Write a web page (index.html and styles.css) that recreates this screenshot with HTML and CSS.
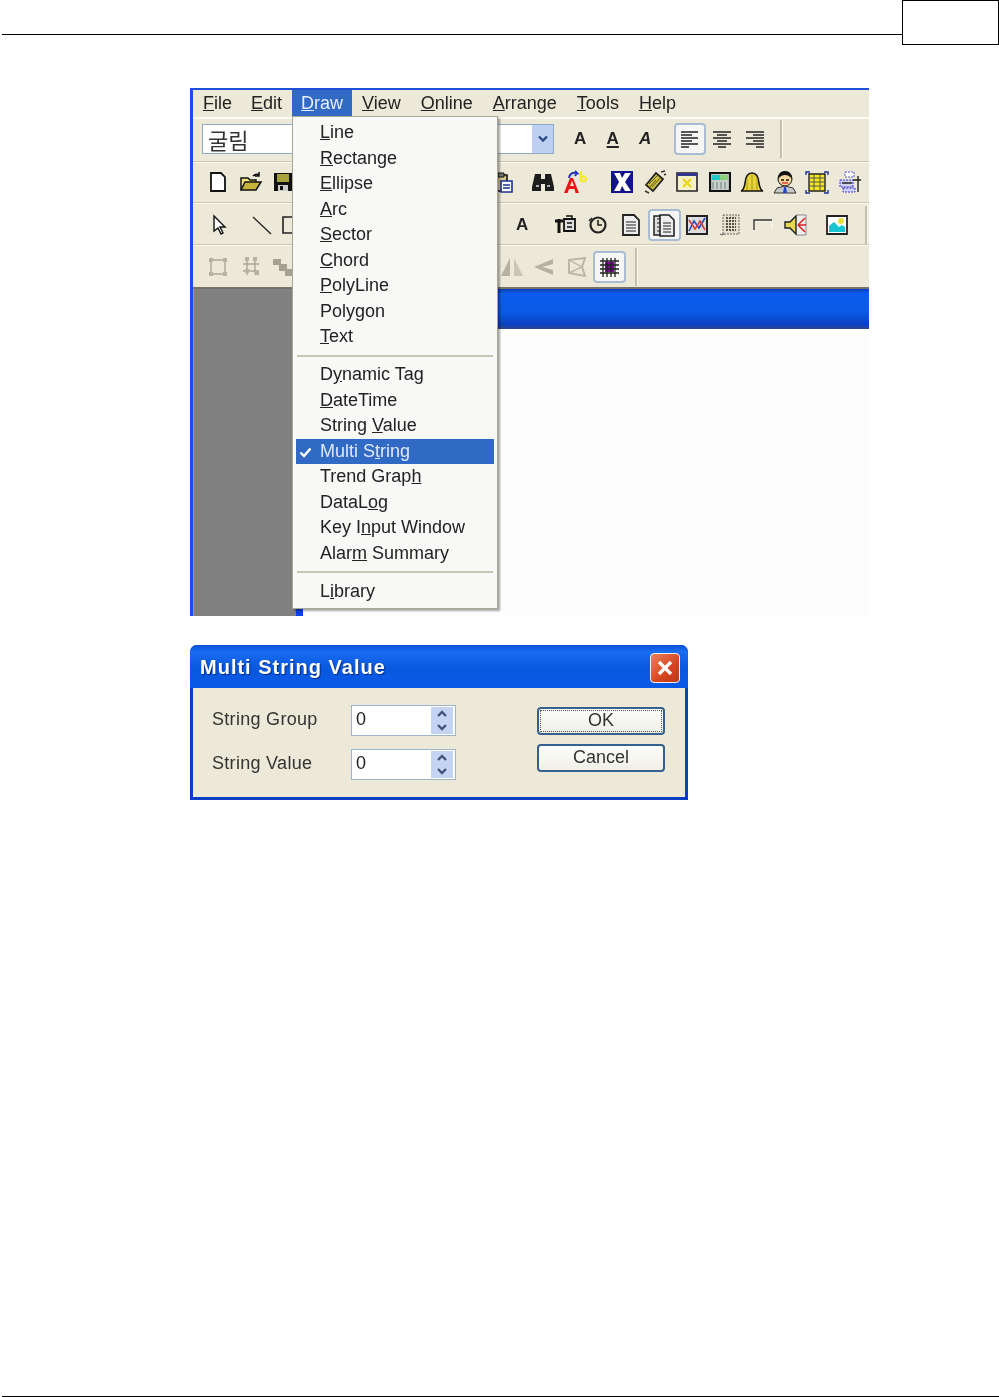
FILE: index.html
```html
<!DOCTYPE html>
<html lang="en">

<head>
    <meta charset="UTF-8">
    <meta name="viewport" content="width=device-width, initial-scale=1.0">
    <title>Multi String</title>
    <link rel="stylesheet" href="styles.css">
</head>

<body>
    <div class="page">

        <!-- Page header with number box -->
        <header class="page-header">
            <div class="header-rule"></div>
            <div class="page-box"></div>
        </header>

        <!-- Editor screenshot -->
        <div class="editor">
            <nav class="menubar">
                <span class="menubar-item"><u>F</u>ile</span>
                <span class="menubar-item"><u>E</u>dit</span>
                <span class="menubar-item open"><u>D</u>raw</span>
                <span class="menubar-item"><u>V</u>iew</span>
                <span class="menubar-item"><u>O</u>nline</span>
                <span class="menubar-item"><u>A</u>rrange</span>
                <span class="menubar-item"><u>T</u>ools</span>
                <span class="menubar-item"><u>H</u>elp</span>
            </nav>

            <!-- Font toolbar -->
            <div class="toolbar toolbar-font">
                <div class="font-combo">
                    <span class="font-name">굴림</span>
                    <span class="combo-arrow"><svg width="12" height="8" viewBox="0 0 12 8"><path d="M2 1.5l4 4 4-4" fill="none" stroke="#2b4a86" stroke-width="2.4"/></svg></span>
                </div>
                <span class="tool-letter">A</span>
                <span class="tool-letter underlined">A</span>
                <span class="tool-letter slanted">A</span>
                <span class="tool active"><svg width="22" height="22" viewBox="0 0 22 22"><path d="M2 4h17M2 7h11M2 10h17M2 13h11M2 16h17M2 19h8" stroke="#222" stroke-width="1.3"/></svg></span>
                <span class="tool"><svg width="22" height="22" viewBox="0 0 22 22"><path d="M2 4h18M6 7h10M2 10h18M6 13h10M2 16h18M7 19h8" stroke="#222" stroke-width="1.3"/></svg></span>
                <span class="tool"><svg width="22" height="22" viewBox="0 0 22 22"><path d="M2 4h18M9 7h11M2 10h18M9 13h11M2 16h18M12 19h8" stroke="#222" stroke-width="1.3"/></svg></span>
                <span class="bar-sep sep-font"></span>
            </div>

            <!-- File and object toolbar -->
            <div class="toolbar toolbar-file">
                <span class="tool"><svg width="22" height="22" viewBox="0 0 22 22"><path d="M4 2h10l4 4v14H4z" fill="#fff" stroke="#111" stroke-width="1.8"/></svg></span>
                <span class="tool"><svg width="24" height="22" viewBox="0 0 24 22"><path d="M2 19V7h7l2 2h6v3" fill="#f4e27a" stroke="#111" stroke-width="1.5"/><path d="M2 19l4-8h16l-5 8z" fill="#c9b23a" stroke="#111" stroke-width="1.5"/><path d="M14 5q3-3 6-1M20 1v4h-4" fill="none" stroke="#111" stroke-width="1.5"/></svg></span>
                <span class="tool"><svg width="22" height="22" viewBox="0 0 22 22"><path d="M2 2h18v18H2z" fill="#111"/><path d="M5 3h12v8H5z" fill="#a8a23c"/><path d="M6 14h10v6H6z" fill="#ccc"/><path d="M8 15h3v4H8z" fill="#111"/></svg></span>
                <span class="tool after-menu"><svg width="22" height="22" viewBox="0 0 22 22"><path d="M3 4h12v16H3z" fill="#d9c98c" stroke="#111" stroke-width="1.6"/><path d="M6 2h6v4H6z" fill="#777" stroke="#111"/><path d="M9 10h11v11H9z" fill="#fff" stroke="#1c2f99" stroke-width="1.6"/><path d="M11 14h7M11 17h7" stroke="#1c2f99" stroke-width="1.4"/></svg></span>
                <span class="tool gap-s"><svg width="24" height="22" viewBox="0 0 24 22"><path d="M4 3h6v5h4V3h6l3 13v4h-9v-7h-4v7H1v-4z" fill="#1c1c1c"/><path d="M5 15h3M16 15h3" stroke="#aaa" stroke-width="2"/></svg></span>
                <span class="tool"><svg width="26" height="24" viewBox="0 0 26 24"><path d="M1 23L7 8h3l6 15h-3.500l-1-4H6l-1.500 4zM7 16h4L9 11z" fill="#ec1515" fill-rule="evenodd"/><path d="M6 8q1-6 8-5l-2-2M14 3l-2 3" fill="none" stroke="#2135b5" stroke-width="2"/><path d="M18 1v11M18 9a2.5 2.5 0 1 0 5 0a2.5 2.5 0 1 0-5 0" fill="none" stroke="#f5ea26" stroke-width="2.4"/></svg></span>
                <span class="tool gap-m"><svg width="24" height="24" viewBox="0 0 24 24"><path d="M1 1h22v22H1z" fill="#12148f"/><path d="M4 3h6l2 5 3-5h6l-6 9 6 9h-6l-3-5-2 5H4l5-9z" fill="#fff"/></svg></span>
                <span class="tool"><svg width="24" height="24" viewBox="0 0 24 24"><path d="M3 15L13 3l7 6-10 12z" fill="#cfc23e" stroke="#222" stroke-width="1.8"/><path d="M6 14l9-9M9 17l8-9M6 18l7-8" stroke="#5c5510"/><path d="M18 2l4-1M21 5l2-1M2 21l4 2" stroke="#333" stroke-width="1.4"/></svg></span>
                <span class="tool"><svg width="22" height="22" viewBox="0 0 22 22"><path d="M1 2h20v18H1z" fill="#f5f0c8" stroke="#222" stroke-width="1.6"/><path d="M1 2h20v3H1z" fill="#33358f"/><path d="M7 8l8 8M15 8l-8 8" stroke="#e8d91e" stroke-width="2.4"/></svg></span>
                <span class="tool"><svg width="22" height="22" viewBox="0 0 22 22"><path d="M1 2h20v18H1z" fill="#c5cfc5" stroke="#111" stroke-width="2.2"/><path d="M3 4h8v5H3z" fill="#25c7cf"/><path d="M11 4h8v5h-8z" fill="#8bd07d"/><path d="M4 11v7M8 11v7M12 11v7M16 11v7" stroke="#778"/></svg></span>
                <span class="tool"><svg width="24" height="24" viewBox="0 0 24 24"><path d="M1 21q3-1 4-8Q6 3 12 3t7 10q1 7 4 8z" fill="#e6d338" stroke="#111" stroke-width="1.6"/><path d="M7 8v12M12 5v15M17 8v12" stroke="#a99a20"/></svg></span>
                <span class="tool"><svg width="24" height="24" viewBox="0 0 24 24"><circle cx="12" cy="9" r="7" fill="#f5d59a" stroke="#111"/><path d="M5 9q0-8 7-8t7 8q-3-4-7-4T5 9z" fill="#111"/><path d="M8 10h3M13 10h3" stroke="#111" stroke-width="1.6"/><path d="M9 13h6" stroke="#d33" stroke-width="1.4"/><path d="M1 23l3-5 8-2 8 2 3 5z" fill="#c8c8c8" stroke="#333"/><path d="M11 17h2l1 6h-4z" fill="#2446c4"/></svg></span>
                <span class="tool"><svg width="24" height="24" viewBox="0 0 24 24"><path d="M4 4h16v17H4z" fill="#f5e91a" stroke="#222" stroke-width="1.4"/><path d="M4 8h16M4 12h16M4 16h16M9 4v17M15 4v17" stroke="#555"/><path d="M1 5V2h4M19 2h4v3M1 20v3h4M19 23h4v-3" fill="none" stroke="#1c2f99" stroke-width="1.4"/></svg></span>
                <span class="tool"><svg width="24" height="24" viewBox="0 0 24 24"><path d="M7 2h9v5H7z" fill="#fff" stroke="#5b5bd0" stroke-dasharray="2 1"/><path d="M2 10h13v7H2zM5 18h12v4H5z" fill="#cfd2f5" stroke="#3a3ad8" stroke-dasharray="2 1"/><path d="M20 6v16M15 10h8M4 13h10" stroke="#222" stroke-width="1.4"/></svg></span>
            </div>

            <!-- Drawing toolbar -->
            <div class="toolbar toolbar-draw">
                <span class="tool"><svg width="22" height="22" viewBox="0 0 22 22"><path d="M6 2v15l4-3 3 6 2-1-3-6h5z" fill="#fff" stroke="#111" stroke-width="1.4"/></svg></span>
                <span class="tool tool-line"><svg width="22" height="22" viewBox="0 0 22 22"><path d="M2 3l18 17" stroke="#222" stroke-width="1.3"/></svg></span>
                <span class="tool tool-rect"><svg width="22" height="22" viewBox="0 0 22 22"><path d="M3 3h16v16H3z" fill="none" stroke="#222" stroke-width="1.6"/></svg></span>
                <span class="tool-letter after-menu-draw">A</span>
                <span class="tool tool-tag"><svg width="24" height="22" viewBox="0 0 24 22"><path d="M2 7h8M6 5v14" stroke="#111" stroke-width="3"/><path d="M11 5h11v12H11z" fill="#ddd" stroke="#111" stroke-width="1.8"/><path d="M13 2h6v3" fill="none" stroke="#111" stroke-width="1.4"/><path d="M14 9h5M14 13h5" stroke="#111" stroke-width="1.4"/></svg></span>
                <span class="tool"><svg width="20" height="20" viewBox="0 0 20 20"><circle cx="10" cy="10" r="7.5" fill="#e8e4d0" stroke="#222" stroke-width="2.2"/><path d="M10 5v5h4" fill="none" stroke="#222" stroke-width="1.6"/><path d="M4 3L1 6" stroke="#222" stroke-width="1.6"/></svg></span>
                <span class="tool"><svg width="22" height="24" viewBox="0 0 22 24"><path d="M3 2h11l5 5v15H3z" fill="#eee" stroke="#222" stroke-width="1.8"/><path d="M6 9h10M6 12h10M6 15h10M6 18h10" stroke="#222" stroke-width="1.2"/></svg></span>
                <span class="tool active"><svg width="24" height="24" viewBox="0 0 24 24"><path d="M2 3h10v19H2z" fill="#ddd" stroke="#222" stroke-width="1.5"/><path d="M5 6h3M5 10h3M5 14h3M5 18h3" stroke="#222"/><path d="M8 2h9l5 5v16H8z" fill="#eee" stroke="#222" stroke-width="1.6"/><path d="M11 10h8M11 13h8M11 16h8M11 19h8" stroke="#222"/></svg></span>
                <span class="tool"><svg width="22" height="22" viewBox="0 0 22 22"><path d="M1 2h20v18H1z" fill="#ddd" stroke="#222" stroke-width="2"/><path d="M3 17l5-10 5 7 6-10" fill="none" stroke="#2446c4" stroke-width="1.6"/><path d="M3 6l6 9 5-8 5 9" fill="none" stroke="#d93a3a" stroke-width="1.6"/></svg></span>
                <span class="tool"><svg width="22" height="24" viewBox="0 0 22 24"><path d="M4 2h16v19H4z" fill="#e4e0cc" stroke="#666" stroke-dasharray="2 1"/><path d="M7 5h10M7 8h10M7 11h10M7 14h10M7 17h10" stroke="#222" stroke-width="1.6" stroke-dasharray="2 1"/><path d="M1 21q2 2 4 0" fill="none" stroke="#555"/></svg></span>
                <span class="tool"><svg width="22" height="14" viewBox="0 0 22 14"><path d="M2 12V3h18v9" fill="none" stroke="#f4f2e6" stroke-width="2"/><path d="M2 12V2h18" fill="none" stroke="#333" stroke-width="1.4"/></svg></span>
                <span class="tool"><svg width="24" height="24" viewBox="0 0 24 24"><path d="M13 2h9v20h-9" fill="#eee" stroke="#888"/><path d="M1 9h5l6-6v18l-6-6H1z" fill="#e6d84a" stroke="#222" stroke-width="1.4"/><path d="M14 12l7-7M14 12h8M14 12l7 7" stroke="#e02020" stroke-width="1.5"/></svg></span>
                <span class="tool gap-s"><svg width="22" height="22" viewBox="0 0 22 22"><path d="M1 2h20v18H1z" fill="#fff" stroke="#222" stroke-width="1.8"/><path d="M3 18V12l5-4 5 5 3-2 3 2v5z" fill="#19c3cf"/><circle cx="15" cy="7" r="3" fill="#e8dd3a"/></svg></span>
                <span class="bar-sep sep-draw"></span>
            </div>

            <!-- Layout toolbar, mostly disabled -->
            <div class="toolbar toolbar-layout">
                <span class="tool"><svg width="22" height="22" viewBox="0 0 22 22"><path d="M4 4h14v14H4z" fill="none" stroke="#aaa79a" stroke-width="1.4"/><path d="M2 2h4v4H2zM16 2h4v4h-4zM2 16h4v4H2zM16 16h4v4h-4z" fill="#b5b2a4"/></svg></span>
                <span class="tool"><svg width="22" height="22" viewBox="0 0 22 22"><path d="M7 3v16M15 3v16M3 8h16M3 15h16" stroke="#aaa79a" stroke-width="1.4"/><path d="M5 1h4v4H5zM13 1h4v4h-4zM5 13h4v4H5zM15 15h4v4h-4z" fill="#b5b2a4"/></svg></span>
                <span class="tool"><svg width="22" height="22" viewBox="0 0 22 22"><path d="M1 3h8v5h6v5h6v7h-8v-5H7V9H1z" fill="#a5a294"/></svg></span>
                <span class="tool after-menu-layout"><svg width="24" height="22" viewBox="0 0 24 22"><path d="M10 2v18H1z" fill="#b5b2a4"/><path d="M14 2v18h9z" fill="#c9c6b8"/></svg></span>
                <span class="tool"><svg width="22" height="22" viewBox="0 0 22 22"><path d="M20 3v5L9 11l11 3v5L1 11z" fill="#b5b2a4"/></svg></span>
                <span class="tool"><svg width="22" height="22" viewBox="0 0 22 22"><path d="M3 4l16-2-3 9 3 9-16-3z" fill="none" stroke="#bab7a9" stroke-width="2"/><path d="M3 4l13 7-13 6" fill="none" stroke="#bab7a9" stroke-width="1.4"/></svg></span>
                <span class="tool active"><svg width="22" height="22" viewBox="0 0 22 22"><path d="M7 6h9v10H7z" fill="#7a0a8e"/><path d="M5 2v19M9 2v19M13 2v19M17 2v19M2 5h19M2 9h19M2 13h19M2 17h19" stroke="#222" stroke-width="1.3"/></svg></span>
                <span class="bar-sep sep-layout"></span>
            </div>

            <!-- Work area under the toolbars -->
            <div class="workspace">
                <div class="gray-side"></div>
                <div class="child-window">
                    <div class="child-title"></div>
                    <div class="child-body">
                        <div class="child-edge"></div>
                    </div>
                </div>
            </div>

            <!-- Open Draw menu -->
            <div class="draw-menu">
                <div class="menu-item"><u>L</u>ine</div>
                <div class="menu-item"><u>R</u>ectange</div>
                <div class="menu-item"><u>E</u>llipse</div>
                <div class="menu-item"><u>A</u>rc</div>
                <div class="menu-item"><u>S</u>ector</div>
                <div class="menu-item"><u>C</u>hord</div>
                <div class="menu-item"><u>P</u>olyLine</div>
                <div class="menu-item">Poly<u>g</u>on</div>
                <div class="menu-item"><u>T</u>ext</div>
                <div class="menu-sep"></div>
                <div class="menu-item">D<u>y</u>namic Tag</div>
                <div class="menu-item"><u>D</u>ateTime</div>
                <div class="menu-item">String <u>V</u>alue</div>
                <div class="menu-item selected">
                    <svg class="check" width="13" height="11" viewBox="0 0 13 11"><path d="M1.5 5.5l3.5 3.5 6.5-7.5" fill="none" stroke="#fff" stroke-width="2.4"/></svg>
                    Multi S<u>t</u>ring
                </div>
                <div class="menu-item">Trend Grap<u>h</u></div>
                <div class="menu-item">DataL<u>o</u>g</div>
                <div class="menu-item">Key I<u>n</u>put Window</div>
                <div class="menu-item">Alar<u>m</u> Summary</div>
                <div class="menu-sep"></div>
                <div class="menu-item">L<u>i</u>brary</div>
            </div>
        </div>

        <!-- Multi String Value dialog -->
        <div class="dialog">
            <div class="dialog-title">
                <span>Multi String Value</span>
                <span class="close-btn"><svg width="18" height="18" viewBox="0 0 18 18"><path d="M3 3l12 12M15 3L3 15" stroke="#fff" stroke-width="3.2"/></svg></span>
            </div>
            <div class="dialog-body">
                <div class="dialog-fields">
                    <label class="field-label">String Group</label>
                    <div class="spin">
                        <span class="spin-value">0</span>
                        <span class="spin-buttons">
                            <span class="spin-btn"><svg width="12" height="7" viewBox="0 0 12 7"><path d="M2 6l4-4 4 4" fill="none" stroke="#42557f" stroke-width="2.4"/></svg></span>
                            <span class="spin-btn"><svg width="12" height="7" viewBox="0 0 12 7"><path d="M2 1l4 4 4-4" fill="none" stroke="#42557f" stroke-width="2.4"/></svg></span>
                        </span>
                    </div>
                    <label class="field-label">String Value</label>
                    <div class="spin">
                        <span class="spin-value">0</span>
                        <span class="spin-buttons">
                            <span class="spin-btn"><svg width="12" height="7" viewBox="0 0 12 7"><path d="M2 6l4-4 4 4" fill="none" stroke="#42557f" stroke-width="2.4"/></svg></span>
                            <span class="spin-btn"><svg width="12" height="7" viewBox="0 0 12 7"><path d="M2 1l4 4 4-4" fill="none" stroke="#42557f" stroke-width="2.4"/></svg></span>
                        </span>
                    </div>
                </div>
                <div class="dialog-buttons">
                    <button class="dlg-btn default">OK</button>
                    <button class="dlg-btn">Cancel</button>
                </div>
            </div>
        </div>

        <footer class="page-footer"></footer>
    </div>
</body>

</html>
```

FILE: styles.css
```css
body {
    margin: 0;
    background-color: #fff;
    font-family: "Liberation Sans", Arial, sans-serif;
    color: #222;
}

.page {
    display: flex;
    flex-direction: column;
    min-height: 1397px;
    box-sizing: border-box;
}

/* page header */
.page-header {
    display: flex;
    align-items: flex-start;
    height: 45px;
    margin-left: 2px;
}

.header-rule {
    flex: 1;
    height: 34px;
    border-bottom: 1px solid #000;
}

.page-box {
    width: 97px;
    height: 45px;
    box-sizing: border-box;
    border: 1px solid #000;
}

/* editor screenshot */
.editor {
    position: relative;
    width: 679px;
    height: 528px;
    margin: 43px 0 0 190px;
    box-sizing: border-box;
    border-top: 2px solid #1f4fd8;
    border-left: 3px solid #1a50e8;
    background-color: #ece9d8;
    display: flex;
    flex-direction: column;
    font-size: 18px;
    filter: blur(0.5px);
}

.menubar {
    display: flex;
    height: 27px;
    align-items: center;
    flex-shrink: 0;
    border-bottom: 1px solid #fbfaf3;
    box-shadow: 0 1px 0 #b9b6a4;
}

.menubar-item {
    height: 27px;
    line-height: 27px;
    padding: 0 10px;
}

.menubar-item:first-child {
    padding-right: 9px;
}

.menubar-item.open {
    background-color: #316ac5;
    color: #e6ecfa;
    padding: 0 9px;
}

.toolbar {
    display: flex;
    align-items: center;
    flex-shrink: 0;
    box-sizing: border-box;
    border-bottom: 1px solid #c8c5b2;
    border-top: 1px solid #fbfaf3;
    padding-left: 9px;
}

.toolbar-font {
    height: 44px;
    padding-bottom: 2px;
}

.toolbar-file {
    height: 41px;
    padding-bottom: 2px;
}

.toolbar-draw {
    height: 42px;
    padding-top: 1px;
}

.toolbar-layout {
    height: 44px;
    border-bottom: 2px solid #74736a;
}

.tool {
    display: flex;
    align-items: center;
    justify-content: center;
    width: 32.5px;
    height: 32px;
    box-sizing: border-box;
    flex-shrink: 0;
}

.toolbar-draw .tool {
    width: 33px;
}

.tool.active {
    background-color: #f6f7f4;
    border: 2px solid #a8bdd4;
    border-radius: 4px;
}

.tool-letter {
    width: 32.5px;
    text-align: center;
    font-weight: bold;
    font-size: 17px;
    flex-shrink: 0;
}

.tool-letter.underlined {
    text-decoration: underline;
    text-underline-offset: 2px;
    text-decoration-thickness: 2px;
}

.tool-letter.slanted {
    font-style: italic;
    margin-right: 12px;
}

.bar-sep {
    width: 2px;
    height: 38px;
    background-color: #c3c0ae;
    border-right: 1px solid #fbfaf3;
}

.sep-font {
    margin-left: 9px;
}

.sep-draw {
    margin-left: 11px;
}

.sep-layout {
    margin-left: 9px;
}

/* font combo box, middle part hidden by the menu */
.font-combo {
    display: flex;
    align-items: center;
    justify-content: space-between;
    width: 352px;
    height: 30px;
    box-sizing: border-box;
    background-color: #fff;
    border: 1px solid #8fa9c8;
    margin-right: 10px;
}

.font-name {
    font-family: "Noto Sans CJK KR", sans-serif;
    font-size: 22px;
    line-height: 28px;
    padding-left: 5px;
    color: #333;
}

.combo-arrow {
    display: flex;
    align-items: center;
    justify-content: center;
    width: 21px;
    height: 28px;
    background-color: #bdd0f2;
}

.after-menu {
    margin-left: 187px;
}

.gap-s {
    margin-left: 8px;
}

.gap-m {
    margin-left: 14px;
}

.tool-line {
    margin-left: 10px;
}

.tool-rect {
    margin-left: -4px;
}

.after-menu-draw {
    margin-left: 199px;
}

.tool-tag {
    margin-left: 10px;
}

.after-menu-layout {
    margin-left: 196px;
}

/* work area */
.workspace {
    flex: 1;
    display: flex;
    min-height: 0;
}

.gray-side {
    width: 103px;
    box-sizing: border-box;
    background-color: #808080;
    border-left: 1px solid #a09c80;
}

.child-window {
    flex: 1;
    display: flex;
    flex-direction: column;
}

.child-title {
    height: 40px;
    background: linear-gradient(to bottom, #0a3fb8 0, #0a5cec 12%, #0b58e6 60%, #0a3fc0 90%, #33458c 100%);
}

.child-body {
    flex: 1;
    display: flex;
    background-color: #fdfdfd;
}

.child-edge {
    width: 7px;
    background-color: #0a3ff0;
}

/* open menu */
.draw-menu {
    position: absolute;
    left: 99px;
    top: 26px;
    width: 206px;
    height: 493px;
    box-sizing: border-box;
    padding: 3px 3px 0;
    background-color: #f8f8f7;
    border: 1px solid #a9a696;
    box-shadow: 2px 2px 2px rgba(0, 0, 0, 0.35);
}

.menu-item {
    position: relative;
    height: 25.5px;
    line-height: 25.5px;
    padding-left: 24px;
    white-space: nowrap;
}

.menu-item.selected {
    background-color: #316ac5;
    color: #dfe8fa;
}

.check {
    position: absolute;
    left: 3px;
    top: 8px;
}

.menu-sep {
    height: 2px;
    margin: 5px 1px 5.5px;
    background-color: #c9c6b6;
}

/* dialog */
.dialog {
    width: 498px;
    height: 155px;
    margin: 29px 0 0 190px;
    box-sizing: border-box;
    display: flex;
    flex-direction: column;
    background-color: #0a3fc4;
    border-radius: 7px 7px 0 0;
    padding: 0 3px 3px;
    filter: blur(0.5px);
}

.dialog-title {
    display: flex;
    align-items: center;
    justify-content: space-between;
    height: 43px;
    box-sizing: border-box;
    flex-shrink: 0;
    margin: 0 -3px;
    padding: 2px 8px 0 10px;
    background: linear-gradient(to bottom, #0a4fd8 0, #1a6cf0 15%, #0858e0 55%, #0a5ae8 100%);
    border-radius: 7px 7px 0 0;
    color: #fff;
    font-size: 20px;
    font-weight: bold;
    letter-spacing: 1px;
    text-shadow: 1px 1px 1px #0a2a80;
}

.close-btn {
    display: flex;
    align-items: center;
    justify-content: center;
    width: 30px;
    height: 30px;
    box-sizing: border-box;
    border: 1px solid #f2f2f2;
    border-radius: 4px;
    background: linear-gradient(135deg, #e8835e, #d8451f 60%, #b93a18);
}

.dialog-body {
    flex: 1;
    display: flex;
    justify-content: space-between;
    padding: 17px 20px 0 19px;
    background-color: #ece9d8;
    font-size: 18px;
}

.dialog-fields {
    display: grid;
    grid-template-columns: 139px 105px;
    grid-auto-rows: 31px;
    row-gap: 13px;
    align-items: center;
}

.field-label {
    color: #333;
    letter-spacing: 0.3px;
    padding-bottom: 3px;
}

.spin {
    display: flex;
    align-items: center;
    justify-content: space-between;
    height: 31px;
    box-sizing: border-box;
    border: 1px solid #9db4ce;
    background-color: #fff;
    padding-right: 2px;
}

.spin-value {
    padding: 0 0 3px 4px;
}

.spin-buttons {
    display: flex;
    flex-direction: column;
    width: 22px;
    height: 27px;
}

.spin-btn {
    flex: 1;
    display: flex;
    align-items: center;
    justify-content: center;
    background-color: #c4d4f2;
}

.dialog-buttons {
    display: flex;
    flex-direction: column;
    gap: 9px;
    padding-top: 2px;
}

.dlg-btn {
    width: 128px;
    height: 28px;
    padding: 0 0 3px;
    background: linear-gradient(to bottom, #fdfdfa, #f0efe6);
    border: 2px solid #36608f;
    border-radius: 4px;
    font-family: inherit;
    font-size: 18px;
    line-height: 20px;
    color: #333;
}

.dlg-btn.default {
    outline: 1px dotted #555;
    outline-offset: -4px;
}

/* page footer */
.page-footer {
    margin-top: auto;
    height: 1px;
    margin-left: 2px;
    background-color: #000;
}
```
